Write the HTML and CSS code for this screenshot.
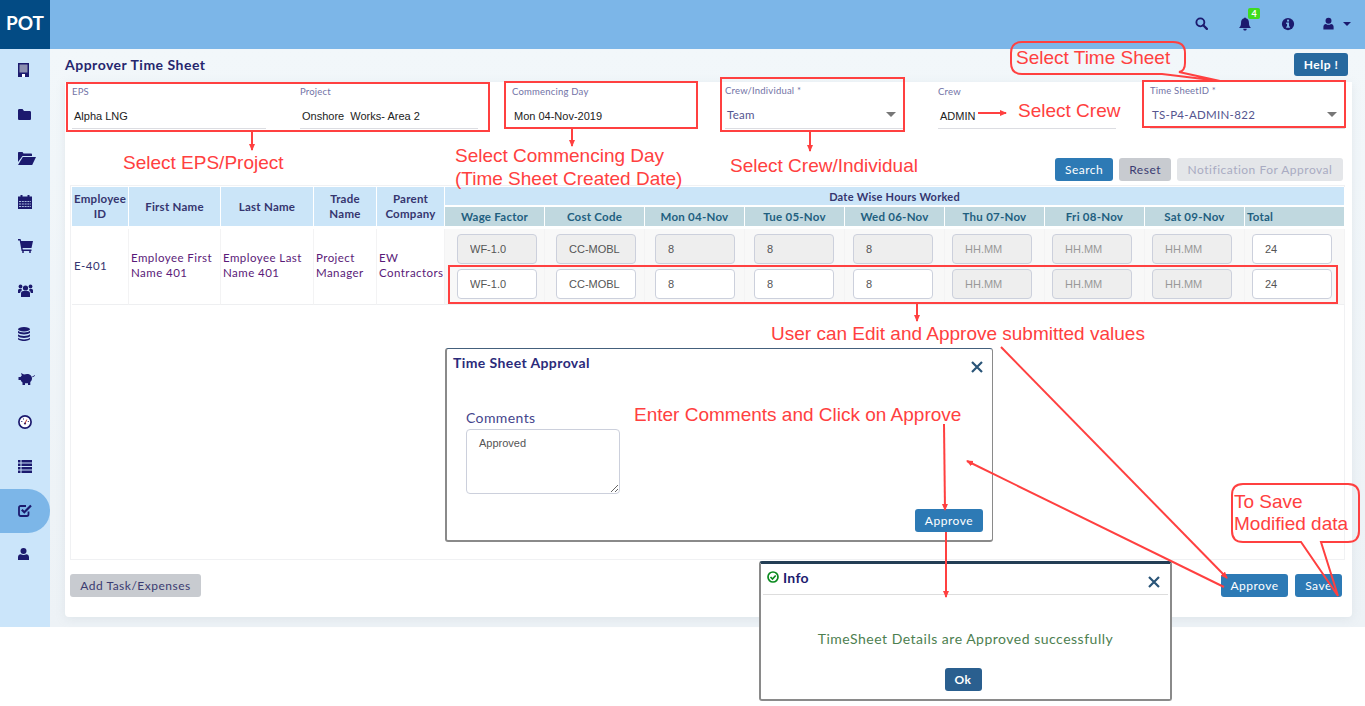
FILE: index.html
```html
<!DOCTYPE html>
<html lang="en">
<head>
  <meta charset="UTF-8">
  <meta name="viewport" content="width=device-width, initial-scale=1.0">
  <title>Approver Time Sheet - POT</title>
  <link rel="stylesheet" href="styles.css">
</head>
<body>

<header class="topbar">
  <div class="logo">POT</div>
  <div class="top-icons">
    <span class="top-icon">
      <svg width="13" height="13" viewBox="0 0 16 16"><circle cx="6.600" cy="6.600" r="4.900" fill="none" stroke="#1c1a6e" stroke-width="2.300"/><path d="M10.200 10.200l4.400 4.400" stroke="#1c1a6e" stroke-width="2.800" stroke-linecap="round"/></svg>
    </span>
    <span class="top-icon">
      <svg width="14" height="14" viewBox="0 0 16 16"><path d="M8 0.500c.7 0 1 .5 1 1 2.300.5 3.500 2.300 3.500 4.700 0 3.500 1 4.800 2.300 6.300H1.200C2.500 11 3.500 9.700 3.500 6.200 3.500 3.800 4.700 2 7 1.500c0-.5.300-1 1-1zM6 13.300h4c0 1.300-.9 2.200-2 2.200s-2-.9-2-2.200z" fill="#1c1a6e"/></svg>
      <b class="badge">4</b>
    </span>
    <span class="top-icon">
      <svg width="14" height="14" viewBox="0 0 16 16"><circle cx="8" cy="8" r="7" fill="#1c1a6e"/><rect x="6.900" y="3" width="2.300" height="2.200" fill="#7cb6e8"/><path d="M5.900 6.400h3.300v4.500h1v1.500H5.900v-1.500h1V7.900h-1z" fill="#7cb6e8"/></svg>
    </span>
    <span class="top-icon user-menu">
      <svg width="11" height="13" viewBox="0 0 14 16"><circle cx="7" cy="4.500" r="3.800" fill="#1c1a6e"/><path d="M0.500 15.500v-3.300c0-2.300 1.500-3.700 3.300-3.700 1 .8 2.100 1.200 3.200 1.200s2.200-.4 3.200-1.200c1.800 0 3.300 1.400 3.300 3.700v3.300z" fill="#1c1a6e"/></svg>
      <i class="caret"></i>
    </span>
  </div>
</header>

<div class="app">
  <nav class="sidebar">
    <a class="nav-item"><svg width="11" height="14" viewBox="0 0 11 14"><rect width="11" height="14" fill="#1c1a6e"/><rect x="1.500" y="1.500" width="8" height="8" fill="#8c8fb0"/><rect x="4" y="11" width="3" height="3" fill="#fff"/></svg></a>
    <a class="nav-item"><svg width="13" height="11" viewBox="0 0 13 11"><path d="M0 1.500C0 .5.500 0 1.500 0h3L6 2h5.500c1 0 1.500.5 1.500 1.500V9.500c0 1-.5 1.500-1.500 1.500h-10C.5 11 0 10.500 0 9.500z" fill="#1c1a6e"/></svg></a>
    <a class="nav-item"><svg width="18" height="13" viewBox="0 0 18 13"><path d="M0 1c0-.6.400-1 1-1h3.500l1 1.500H13c.6 0 1 .4 1 1V4H4.500L0 10z" fill="#1c1a6e"/><path d="M4.800 5H18l-3.800 8H0z" fill="#1c1a6e"/></svg></a>
    <a class="nav-item"><svg width="14" height="14" viewBox="0 0 14 14"><rect y="1.500" width="14" height="12.500" fill="#1c1a6e"/><rect x="2.500" width="2" height="3" fill="#1c1a6e"/><rect x="9.500" width="2" height="3" fill="#1c1a6e"/><path d="M1 6.500h12M1 9h12M1 11.500h12" stroke="#cbe5fa" stroke-width=".8" stroke-dasharray="2 .8"/></svg></a>
    <a class="nav-item"><svg width="15" height="14" viewBox="0 0 15 14"><path d="M0 0h2.500l.7 2H15l-1.500 7H4.500l.3 1.500h8.700V12H3.600L1.700 1.500H0z" fill="#1c1a6e"/><circle cx="5" cy="13" r="1" fill="#1c1a6e"/><circle cx="12" cy="13" r="1" fill="#1c1a6e"/></svg></a>
    <a class="nav-item"><svg width="15" height="13" viewBox="0 0 15 13"><circle cx="7.500" cy="4" r="2.600" fill="#1c1a6e"/><circle cx="2.500" cy="2.500" r="1.900" fill="#1c1a6e"/><circle cx="12.500" cy="2.500" r="1.900" fill="#1c1a6e"/><path d="M3 13V9.500C3 7.800 4 7 5.500 7h4C11 7 12 7.800 12 9.500V13zM0 9V6.500C0 5.500.7 5 1.500 5h2l.5 1.200C2.800 6.800 2.200 7.800 2.200 9zM15 9V6.500c0-1-.7-1.500-1.500-1.500h-2L11 6.200c1.200.6 1.800 1.600 1.800 2.800z" fill="#1c1a6e"/></svg></a>
    <a class="nav-item"><svg width="12" height="14" viewBox="0 0 12 14"><ellipse cx="6" cy="2.200" rx="6" ry="2.200" fill="#1c1a6e"/><path d="M0 3.800C1 5 3.500 5.500 6 5.500s5-.5 6-1.700v2C11 7 8.500 7.500 6 7.500S1 7 0 5.800zM0 7.300C1 8.500 3.500 9 6 9s5-.5 6-1.700v2c-1 1.200-3.500 1.700-6 1.700s-5-.5-6-1.700zM0 10.800C1 12 3.500 12.500 6 12.500s5-.5 6-1.700v1c0 1.300-2.700 2.200-6 2.200s-6-.9-6-2.200z" fill="#1c1a6e"/></svg></a>
    <a class="nav-item"><svg width="17" height="13" viewBox="0 0 17 13"><path d="M3 1l3 1.500C7 2.200 8 2 9 2c3 0 5 2 5 4.500 0 1.500-.7 2.700-1.700 3.500v3H10v-1.700H7V13H4.500v-2.500C3.700 10 3 9 2.700 8H.5V5h2C2.900 4.400 3.300 3.900 3.800 3.500zM14 4.500c1.200 0 2-.6 2.500-1.500l.5.300c-.5 1.300-1.600 2-3 2z" fill="#1c1a6e"/></svg></a>
    <a class="nav-item"><svg width="14" height="14" viewBox="0 0 14 14"><circle cx="7" cy="7" r="6.100" fill="#fff" stroke="#1c1a6e" stroke-width="1.700"/><circle cx="7" cy="8.500" r="1.100" fill="#1c1a6e"/><path d="M7 8.500L8.800 4.500" stroke="#c0392b" stroke-width="1"/><path d="M3.300 6.500h1M9.800 6.500h1M5 4h1" stroke="#1c1a6e" stroke-width="1"/></svg></a>
    <a class="nav-item"><svg width="14" height="13" viewBox="0 0 14 13"><path d="M0 0h2.500v2.500H0zM3.500 0H14v2.500H3.500zM0 3.500h2.500V6H0zM3.500 3.500H14V6H3.500zM0 7h2.500v2.500H0zM3.500 7H14v2.500H3.500zM0 10.500h2.500V13H0zM3.500 10.500H14V13H3.500z" fill="#1c1a6e"/></svg></a>
    <a class="nav-item active"><svg width="14" height="13" viewBox="0 0 14 13"><path d="M10.500 7.500v2.800c0 1-.7 1.700-1.700 1.700H2.700C1.700 12 1 11.300 1 10.300V3.700C1 2.700 1.700 2 2.700 2H8" fill="none" stroke="#1c1a6e" stroke-width="1.800"/><path d="M3.800 5.800L6.300 8.300 13 1.500" fill="none" stroke="#1c1a6e" stroke-width="2.200"/></svg></a>
    <a class="nav-item"><svg width="11" height="12" viewBox="0 0 11 12"><circle cx="5.500" cy="3" r="3" fill="#1c1a6e"/><path d="M0 12V9.200C0 7.500 1.200 6.300 2.700 6.300c.8.500 1.800.8 2.800.8s2-.3 2.800-.8c1.500 0 2.700 1.200 2.700 2.900V12z" fill="#1c1a6e"/></svg></a>
  </nav>

  <main class="main">
    <div class="title-row">
      <h1>Approver Time Sheet</h1>
      <button class="btn btn-help">Help !</button>
    </div>

    <section class="card">
      <div class="filters">
        <div class="field">
          <label>EPS</label>
          <div class="value">Alpha LNG</div>
        </div>
        <div class="field">
          <label>Project</label>
          <div class="value">Onshore&nbsp; Works- Area 2</div>
        </div>
        <div class="field field-plain">
          <label>Commencing Day</label>
          <div class="value">Mon 04-Nov-2019</div>
        </div>
        <div class="field field-up">
          <label>Crew/Individual <em>*</em></label>
          <div class="value select">Team<i class="arrow"></i></div>
        </div>
        <div class="field">
          <label>Crew</label>
          <div class="value">ADMIN</div>
        </div>
        <div class="field field-up field-id">
          <label>Time SheetID <em>*</em></label>
          <div class="value select">TS-P4-ADMIN-822<i class="arrow"></i></div>
        </div>
      </div>

      <div class="toolbar">
        <button class="btn btn-blue">Search</button>
        <button class="btn btn-grey">Reset</button>
        <button class="btn btn-disabled">Notification For Approval</button>
      </div>

      <div class="table-wrap">
        <table class="sheet">
          <colgroup>
            <col class="c-id"><col class="c-first"><col class="c-last"><col class="c-trade"><col class="c-company">
            <col class="c-day"><col class="c-day"><col class="c-day"><col class="c-day"><col class="c-day"><col class="c-day"><col class="c-day"><col class="c-day"><col class="c-day">
          </colgroup>
          <thead>
            <tr>
              <th rowspan="2">Employee ID</th>
              <th rowspan="2">First Name</th>
              <th rowspan="2">Last Name</th>
              <th rowspan="2">Trade Name</th>
              <th rowspan="2">Parent Company</th>
              <th colspan="9" class="th-group">Date Wise Hours Worked</th>
            </tr>
            <tr class="sub-head">
              <th>Wage Factor</th><th>Cost Code</th><th>Mon 04-Nov</th><th>Tue 05-Nov</th><th>Wed 06-Nov</th><th>Thu 07-Nov</th><th>Fri 08-Nov</th><th>Sat 09-Nov</th><th class="th-total">Total</th>
            </tr>
          </thead>
          <tbody>
            <tr class="row-top">
              <td rowspan="2" class="td-id">E-401</td>
              <td rowspan="2" class="td-name">Employee First Name 401</td>
              <td rowspan="2" class="td-name">Employee Last Name 401</td>
              <td rowspan="2" class="td-name">Project Manager</td>
              <td rowspan="2" class="td-name">EW Contractors</td>
              <td class="cell"><input class="hours" value="WF-1.0" disabled></td>
              <td class="cell"><input class="hours" value="CC-MOBL" disabled></td>
              <td class="cell"><input class="hours" value="8" disabled></td>
              <td class="cell"><input class="hours" value="8" disabled></td>
              <td class="cell"><input class="hours" value="8" disabled></td>
              <td class="cell"><input class="hours" placeholder="HH.MM" disabled></td>
              <td class="cell"><input class="hours" placeholder="HH.MM" disabled></td>
              <td class="cell"><input class="hours" placeholder="HH.MM" disabled></td>
              <td class="cell"><input class="hours" value="24"></td>
            </tr>
            <tr class="row-bottom">
              <td class="cell"><input class="hours" value="WF-1.0"></td>
              <td class="cell"><input class="hours" value="CC-MOBL"></td>
              <td class="cell"><input class="hours" value="8"></td>
              <td class="cell"><input class="hours" value="8"></td>
              <td class="cell"><input class="hours" value="8"></td>
              <td class="cell"><input class="hours" placeholder="HH.MM" disabled></td>
              <td class="cell"><input class="hours" placeholder="HH.MM" disabled></td>
              <td class="cell"><input class="hours" placeholder="HH.MM" disabled></td>
              <td class="cell"><input class="hours" value="24"></td>
            </tr>
          </tbody>
        </table>
      </div>

      <div class="card-foot">
        <button class="btn btn-grey btn-add">Add Task/Expenses</button>
        <div class="foot-right">
          <button class="btn btn-blue">Approve</button>
          <button class="btn btn-blue">Save</button>
        </div>
      </div>
    </section>
  </main>
</div>

<!-- popups pasted over the page -->
<div class="modal modal-approval">
  <div class="modal-title">Time Sheet Approval</div>
  <span class="modal-close">
    <svg width="12" height="12" viewBox="0 0 12 12"><path d="M1 1l10 10M11 1L1 11" stroke="#2a5578" stroke-width="2.200"/></svg>
  </span>
  <label class="comment-label">Comments</label>
  <textarea class="comment-box">Approved</textarea>
  <div class="modal-foot">
    <button class="btn btn-blue">Approve</button>
  </div>
</div>

<div class="modal modal-info">
  <div class="info-head">
    <svg width="12" height="12" viewBox="0 0 12 12"><circle cx="6" cy="6" r="5" fill="none" stroke="#0a8a1e" stroke-width="1.700"/><path d="M3.500 6l2 2 3.200-3.500" fill="none" stroke="#0a8a1e" stroke-width="1.700"/></svg>
    <span>Info</span>
    <span class="info-close">
      <svg width="12" height="12" viewBox="0 0 12 12"><path d="M1 1l10 10M11 1L1 11" stroke="#2a5578" stroke-width="2.200"/></svg>
    </span>
  </div>
  <p class="info-text">TimeSheet Details are Approved successfully</p>
  <div class="info-foot">
    <button class="btn btn-ok">Ok</button>
  </div>
</div>

<!-- red notes drawn on the screenshot -->
<svg class="notes" width="1365" height="706" viewBox="0 0 1365 706">
  <defs>
    <marker id="head" markerWidth="8" markerHeight="8" refX="6" refY="3" orient="auto" markerUnits="userSpaceOnUse">
      <path d="M0 0L7 3L0 6z" fill="#ff4040"/>
    </marker>
  </defs>
  <g class="note-lines">
    <rect x="67" y="83" width="422" height="48"/>
    <rect x="505" y="82" width="192" height="46"/>
    <rect x="721" y="78" width="183" height="53"/>
    <rect x="1143" y="81" width="202" height="46"/>
    <rect x="449" y="266" width="888" height="37"/>
    <path d="M1022 42H1173Q1185 42 1185 53V63Q1185 71 1179 72L1220 81L1162 74H1022Q1011 74 1011 63V53Q1011 42 1022 42z"/>
    <path d="M1243 484H1348Q1359 484 1359 495V531Q1359 542 1348 542H1321L1338 596L1301 542H1243Q1232 542 1232 531V495Q1232 484 1243 484z"/>
    <path d="M252 131V150" marker-end="url(#head)"/>
    <path d="M572 128V146" marker-end="url(#head)"/>
    <path d="M810 131V151" marker-end="url(#head)"/>
    <path d="M978 113H1006" marker-end="url(#head)"/>
    <path d="M917 303V321" marker-end="url(#head)"/>
    <path d="M1001 347L1227 578" marker-end="url(#head)"/>
    <path d="M1224 587L967 461" marker-end="url(#head)"/>
    <path d="M944 424L945 510" marker-end="url(#head)"/>
    <path d="M946 532V597" marker-end="url(#head)"/>
  </g>
  <g class="note-text">
    <text x="123" y="169">Select EPS/Project</text>
    <text x="455" y="162">Select Commencing Day</text>
    <text x="455" y="185">(Time Sheet Created Date)</text>
    <text x="730" y="172">Select Crew/Individual</text>
    <text x="1018" y="117">Select Crew</text>
    <text x="1016" y="64">Select Time Sheet</text>
    <text x="771" y="340">User can Edit and Approve submitted values</text>
    <text x="634" y="421">Enter Comments and Click on Approve</text>
    <text x="1234" y="508">To Save</text>
    <text x="1234" y="530">Modified data</text>
  </g>
</svg>

</body>
</html>
```

FILE: styles.css
```css
* {
  margin: 0;
  padding: 0;
  box-sizing: border-box;
}

body {
  position: relative;
  width: 1365px;
  height: 706px;
  overflow: hidden;
  background: #fff;
  font-family: 'Lato', sans-serif;
  color: #2b2b7a;
}

.topbar {
  display: flex;
  justify-content: space-between;
  height: 49px;
  background: #7cb6e8;
}

.logo {
  width: 50px;
  background: #034b84;
  color: #fff;
  font-size: 19px;
  font-weight: bold;
  line-height: 46px;
  text-align: center;
}

.top-icons {
  display: flex;
  align-items: center;
  gap: 26px;
  padding: 0 14px 2px 0;
}

.top-icon {
  position: relative;
  display: flex;
  align-items: center;
  justify-content: center;
  width: 17px;
  height: 16px;
}

.user-menu {
  justify-content: flex-start;
  width: 28px;
  margin-left: 1px;
  gap: 9px;
}

.badge {
  position: absolute;
  top: -8px;
  left: 12px;
  width: 12px;
  height: 11px;
  background: #3fdc1e;
  border-radius: 2px;
  color: #fff;
  font-size: 9px;
  line-height: 11px;
  text-align: center;
}

.caret {
  border-left: 4px solid transparent;
  border-right: 4px solid transparent;
  border-top: 4px solid #1c1a6e;
}

.app {
  display: flex;
  height: 578px;
}

.sidebar {
  width: 50px;
  flex: none;
  background: #cbe5fa;
}

.nav-item {
  display: flex;
  align-items: center;
  height: 44px;
  padding: 0 0 2px 18px;
}

.nav-item.active {
  background: #7cb6e8;
  border-radius: 0 22px 22px 0;
}

.main {
  flex: 1;
  min-width: 0;
  padding: 0 13px 10px 15px;
  background: linear-gradient(to bottom, #f2f7fa, #edf2f6);
}

.title-row {
  display: flex;
  justify-content: space-between;
  align-items: flex-start;
  height: 33px;
  padding-right: 4px;
}

h1 {
  margin-top: 7px;
  font-size: 14px;
  font-weight: bold;
  letter-spacing: 0.5px;
  color: #26266e;
}

.btn {
  height: 23px;
  padding: 0 10px;
  border: none;
  border-radius: 3px;
  font-family: 'Lato', sans-serif;
  font-size: 12px;
  letter-spacing: 0.5px;
}

.btn-help {
  margin-top: 4px;
  width: 54px;
  padding: 0;
  background: #27699f;
  color: #fff;
  font-weight: bold;
}

.btn-blue {
  background: #2d7ab5;
  color: #fff;
}

.btn-grey {
  background: #c8cbd0;
  color: #3b3b70;
}

.btn-add {
  width: 131px;
  padding: 0;
}

.btn-disabled {
  width: 166px;
  padding: 0;
  background: #e4e6e9;
  color: #a9abc2;
}

.btn-ok {
  width: 37px;
  padding: 0;
  background: #2a5f8f;
  color: #fff;
  font-weight: bold;
}

.card {
  height: 535px;
  padding: 0 7px 0 5px;
  background: #fff;
  border-radius: 0 0 4px 4px;
  box-shadow: 0 2px 8px rgba(180, 190, 200, 0.25);
}

.filters {
  display: grid;
  grid-template-columns: 228px 212px 213px 213px 212px 195px;
  height: 47px;
  padding-left: 2px;
}

.field {
  height: 47px;
  padding-right: 34px;
}

.field label {
  display: block;
  padding-top: 4px;
  height: 22px;
  font-size: 9.500px;
  letter-spacing: 0.2px;
  color: #7273a6;
}

.field em {
  font-style: normal;
}

.field .value {
  position: relative;
  height: 25px;
  padding: 5px 0 0 2px;
  border-bottom: 1px solid #dcdde2;
  font-family: 'Liberation Sans', sans-serif;
  font-size: 11px;
  line-height: 14px;
  color: #222;
}

.field-plain .value {
  border-bottom: none;
}

.field-up {
  margin-top: -1px;
  height: 48px;
}

.field-id {
  padding-right: 0;
}

.field .select {
  height: 26px;
  font-family: 'Lato', sans-serif;
  font-size: 11.500px;
  letter-spacing: 0.3px;
  color: #55558f;
}

.arrow {
  position: absolute;
  top: 9px;
  right: 8px;
  border-left: 5px solid transparent;
  border-right: 5px solid transparent;
  border-top: 5px solid #777;
}

.toolbar {
  display: flex;
  justify-content: flex-end;
  gap: 6px;
  height: 56px;
  padding: 29px 2px 0 0;
}

.table-wrap {
  height: 375px;
  border: 1px solid #f0f1f3;
  padding: 1px 0 0 1px;
}

.sheet {
  width: 1273px;
  table-layout: fixed;
  border-collapse: separate;
  border-spacing: 0;
  font-size: 11.500px;
  letter-spacing: 0.45px;
}

.c-id { width: 57px; }
.c-first { width: 92px; }
.c-last { width: 93px; }
.c-trade { width: 63px; }
.c-company { width: 68px; }
.c-day { width: 100px; }

.sheet th {
  padding: 0 2px 1px;
  background: #cbe5f8;
  border-right: 1px solid #fff;
  border-bottom: 3px solid #fff;
  font-weight: bold;
  line-height: 15px;
  letter-spacing: 0.25px;
  color: #35356f;
}

.sheet .th-group {
  height: 20px;
  padding-bottom: 0;
  font-size: 11px;
  border-bottom-width: 2px;
}

.sheet .sub-head th {
  height: 22px;
  padding-bottom: 0;
  background: #c0d8df;
  color: #1f5f7f;
}

.sheet .sub-head .th-total {
  padding-left: 2px;
  text-align: left;
}

.sheet td {
  border-right: 1px solid #f3f3f4;
}

.td-id,
.td-name {
  padding: 0 2px 4px;
  border-bottom: 1px solid #eeeff1;
  line-height: 15px;
  color: #5a1a78;
}

.td-id {
  padding-bottom: 2px;
  color: #35356f;
}

.cell {
  padding-left: 7px;
  background: #f8f8f8;
  vertical-align: top;
}

.cell:nth-last-child(5) { padding-left: 8px; }
.cell:nth-last-child(6) { padding-left: 9px; }
.cell:nth-last-child(7) { padding-left: 10px; }
.cell:nth-last-child(8) { padding-left: 11px; }
.cell:nth-last-child(9) { padding-left: 12px; }

.row-top .cell {
  padding-top: 5px;
  padding-bottom: 5px;
}

.row-bottom .cell {
  padding-bottom: 5px;
  border-bottom: 1px solid #eeeff1;
}

.hours {
  display: block;
  width: 80px;
  height: 30px;
  padding-left: 12px;
  background: #fff;
  border: 1px solid #ccd0dc;
  border-radius: 4px;
  font-family: 'Liberation Sans', sans-serif;
  font-size: 11px;
  color: #555;
  outline: none;
}

.hours:disabled {
  background: #eee;
}

.hours::placeholder {
  color: #999;
  opacity: 1;
}

.card-foot {
  display: flex;
  justify-content: space-between;
  padding: 14px 3px 0 0;
}

.foot-right {
  display: flex;
  gap: 7px;
}

.foot-right .btn {
  width: 67px;
  padding: 0;
}

.foot-right .btn:last-child {
  width: 47px;
}

.modal {
  position: absolute;
  background: #fff;
  border: 2px solid #8a8a8a;
  border-radius: 3px;
}

.modal-approval {
  top: 348px;
  left: 445px;
  width: 548px;
  height: 194px;
  border-top: 1px solid #44607c;
  border-right-width: 1px;
}

.modal-title {
  position: absolute;
  top: 5px;
  left: 6px;
  font-size: 14px;
  font-weight: bold;
  letter-spacing: 0.4px;
}

.modal-close {
  position: absolute;
  display: flex;
  top: 12px;
  right: 9px;
}

.comment-label {
  position: absolute;
  top: 60px;
  left: 19px;
  font-size: 14px;
  letter-spacing: 0.4px;
  color: #45458c;
}

.comment-box {
  position: absolute;
  top: 80px;
  left: 19px;
  width: 154px;
  height: 65px;
  padding: 7px 12px;
  border: 1px solid #ccd0dc;
  border-radius: 4px;
  font-family: 'Liberation Sans', sans-serif;
  font-size: 11px;
  color: #555;
  outline: none;
}

.modal-foot {
  position: absolute;
  right: 9px;
  bottom: 8px;
}

.modal-info {
  top: 561px;
  left: 759px;
  width: 413px;
  height: 140px;
  border-top: 3px solid #233e55;
}

.info-head {
  display: flex;
  align-items: center;
  gap: 4px;
  height: 31px;
  margin: 0 2px;
  padding: 0 0 4px 4px;
  border-bottom: 1px solid #ddd;
  font-size: 14px;
  font-weight: bold;
  letter-spacing: 0.3px;
  color: #1c1a6e;
}

.info-close {
  display: flex;
  margin-left: auto;
  padding: 9px 8px 0 0;
}

.info-text {
  padding-top: 36px;
  font-size: 14px;
  line-height: 16px;
  letter-spacing: 0.5px;
  text-align: center;
  color: #4d8050;
}

.info-foot {
  padding: 21px 5px 0 0;
  text-align: center;
}

.notes {
  position: absolute;
  top: 0;
  left: 0;
  pointer-events: none;
}

.note-lines {
  fill: none;
  stroke: #ff4040;
  stroke-width: 2;
}

.note-text {
  font-family: 'Liberation Sans', sans-serif;
  font-size: 19px;
  fill: #ff4040;
}
```
